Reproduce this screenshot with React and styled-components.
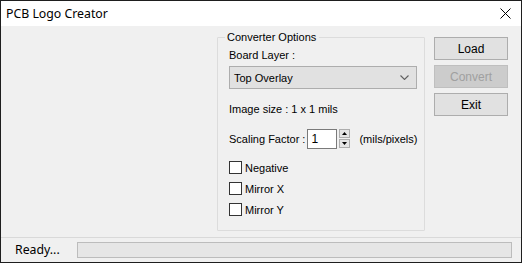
import React from 'react';
import styled, {createGlobalStyle, css} from 'styled-components';

const GlobalStyle = createGlobalStyle`
  html, body {
    margin: 0;
    padding: 0;
    background: #ffffff;
  }
  * {
    box-sizing: border-box;
  }
`

const Window = styled.div`
  width: 522px;
  height: 263px;
  border: 1px solid #1e1e1e;
  background: #f0f0f0;
  display: flex;
  flex-direction: column;
  font-family: "Liberation Sans", Arial, sans-serif;
  font-size: 11px;
  color: #000;
`

const TitleBar = styled.div`
  height: 25px;
  background: #ffffff;
  display: flex;
  align-items: center;
  justify-content: space-between;
  padding: 0 6px 1px 5px;
  font-family: "Noto Sans", sans-serif;
  font-size: 12.3px;
`

const CloseButton = styled.div`
  width: 30px;
  height: 24px;
  display: flex;
  align-items: center;
  justify-content: center;
  margin-right: -5px;
`

const Main = styled.div`
  flex: 1;
  display: flex;
  align-items: flex-start;
  padding: 11px 0 0 216px;
  gap: 9px;
`

const GroupBox = styled.div`
  position: relative;
  width: 208px;
  height: 194px;
  border: 1px solid #dcdcdc;
  border-radius: 1px;
  padding: 11px 0 0 11px;
  display: flex;
  flex-direction: column;
`

const Legend = styled.div`
  position: absolute;
  top: -7px;
  left: 7px;
  padding: 0 3px 0 2px;
  background: #f0f0f0;
  line-height: 13px;
`

const Label = styled.div`
  line-height: 13px;
  margin-top: ${props => props.mt || 0}px;
`

const Select = styled.div`
  margin-top: 4px;
  width: 188px;
  height: 23px;
  background: #e1e1e1;
  border: 1px solid #adadad;
  display: flex;
  align-items: center;
  justify-content: space-between;
  padding: 0 7px 0 4px;
`

const ScaleRow = styled.div`
  margin-top: 12px;
  display: flex;
  align-items: center;
  height: 21px;
`

const NumberBox = styled.div`
  margin-left: 2px;
  width: 30px;
  height: 20px;
  background: #fff;
  border: 1px solid #7a7a7a;
  padding: 2px 0 0 3px;
  font-size: 12px;
  line-height: 14px;
`

const Spinner = styled.div`
  margin-left: 2px;
  width: 11px;
  height: 19px;
  display: flex;
  flex-direction: column;
  gap: 1px;
`

const SpinPart = styled.div`
  flex: 1;
  background: #e5e5e5;
  border: 1px solid #adadad;
  display: flex;
  align-items: center;
  justify-content: center;
`

const Units = styled.div`
  margin-left: 9px;
`

const CheckList = styled.div`
  margin-top: 12px;
  display: flex;
  flex-direction: column;
  gap: 8px;
`

const CheckRow = styled.label`
  display: flex;
  align-items: center;
  gap: 3px;
  height: 13px;
`

const Box = styled.span`
  width: 13px;
  height: 13px;
  background: #fff;
  border: 1px solid #333333;
`

const Buttons = styled.div`
  display: flex;
  flex-direction: column;
  gap: 5px;
`

const Button = styled.div`
  width: 74px;
  height: 23px;
  background: #e1e1e1;
  border: 1px solid #adadad;
  display: flex;
  align-items: center;
  justify-content: center;
  font-size: 12px;
  ${props => props.disabled && css`
    background: #cccccc;
    border-color: #bfbfbf;
    color: #a0a0a0;
  `}
`

const StatusBar = styled.div`
  height: 25px;
  border-top: 1px solid #d9d9d9;
  display: flex;
  align-items: center;
  padding: 0 9px 1px 14px;
`

const StatusText = styled.div`
  width: 62px;
  font-family: "Noto Sans", sans-serif;
  font-size: 12.3px;
`

const Progress = styled.div`
  flex: 1;
  height: 16px;
  background: #e6e6e6;
  border: 1px solid #bcbcbc;
`

function Check({label}) {
  return (
    <CheckRow>
      <Box />
      <span>{label}</span>
    </CheckRow>
  )
}

export default function App() {
  return (
    <>
      <GlobalStyle />
      <Window>
        <TitleBar>
          <span>PCB Logo Creator</span>
          <CloseButton>
            <svg width="11" height="11" viewBox="0 0 11 11">
              <path d="M0.5 0.5 L10.5 10.5 M10.5 0.5 L0.5 10.5" stroke="#000" strokeWidth="1" fill="none" />
            </svg>
          </CloseButton>
        </TitleBar>
        <Main>
          <GroupBox>
            <Legend>Converter Options</Legend>
            <Label>Board Layer :</Label>
            <Select>
              <span>Top Overlay</span>
              <svg width="9" height="5" viewBox="0 0 9 5">
                <path d="M0.5 0.5 L4.5 4.5 L8.5 0.5" stroke="#606060" strokeWidth="1.1" fill="none" />
              </svg>
            </Select>
            <Label mt={14}>Image size : 1 x 1 mils</Label>
            <ScaleRow>
              <span>Scaling Factor :</span>
              <NumberBox>1</NumberBox>
              <Spinner>
                <SpinPart>
                  <svg width="5" height="3" viewBox="0 0 5 3"><path d="M2.5 0 L5 3 L0 3 Z" fill="#000" /></svg>
                </SpinPart>
                <SpinPart>
                  <svg width="5" height="3" viewBox="0 0 5 3"><path d="M0 0 L5 0 L2.5 3 Z" fill="#000" /></svg>
                </SpinPart>
              </Spinner>
              <Units>(mils/pixels)</Units>
            </ScaleRow>
            <CheckList>
              <Check label="Negative" />
              <Check label="Mirror X" />
              <Check label="Mirror Y" />
            </CheckList>
          </GroupBox>
          <Buttons>
            <Button>Load</Button>
            <Button disabled>Convert</Button>
            <Button>Exit</Button>
          </Buttons>
        </Main>
        <StatusBar>
          <StatusText>Ready...</StatusText>
          <Progress />
        </StatusBar>
      </Window>
    </>
  )
}
